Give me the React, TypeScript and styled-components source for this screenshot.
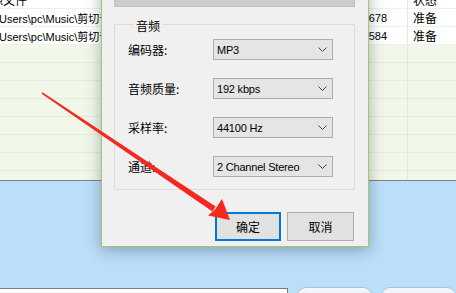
import React from "react";
import styled, { createGlobalStyle } from "styled-components";

const Global = createGlobalStyle`
  html, body { margin: 0; padding: 0; }
  body { width: 456px; height: 293px; overflow: hidden; background: #bbdef9; }
  #root { width: 456px; height: 293px; }
`;

const CJK = `"Noto Sans CJK SC", "Noto Sans", sans-serif`;
const LAT = `"Liberation Sans", "Noto Sans CJK SC", sans-serif`;

const Screen = styled.div`
  position: relative;
  width: 456px;
  height: 293px;
  overflow: hidden;
  display: flex;
  flex-direction: column;
  background: #bbdef9;
`;

const Table = styled.div`
  height: 181px;
  flex: none;
  overflow: hidden;
  border-bottom: 1px solid #7f7f7f;
  box-sizing: border-box;
  background: #f1f8e9;
`;

const TableInner = styled.div`
  margin-top: -9px;
  margin-left: -20px;
  width: 476px;
  display: flex;
  flex-direction: column;
`;

const Row = styled.div<{ $filled?: boolean }>`
  display: grid;
  grid-template-columns: 350px 78px 1fr;
  height: 18px;
  box-sizing: border-box;
  background: ${(p) => (p.$filled ? "#ffffff" : "#f1f8e9")};
  border-bottom: 1px solid ${(p) => (p.$filled ? "#efefef" : "#e4eadc")};
`;

const Cell = styled.div<{ $align?: "left" | "right"; $pad?: number; $cjk?: boolean }>`
  display: flex;
  align-items: center;
  justify-content: ${(p) => (p.$align === "right" ? "flex-end" : "flex-start")};
  padding-left: ${(p) => (p.$align === "right" ? 0 : p.$pad ?? 5)}px;
  padding-right: ${(p) => (p.$align === "right" ? 20 : 0)}px;
  font-family: ${(p) => (p.$cjk ? CJK : LAT)};
  font-size: ${(p) => (p.$cjk ? 12 : 11)}px;
  color: #000;
  white-space: nowrap;
  overflow: hidden;
  border-right: 1px solid #e6e6e6;
  &:last-child { border-right: none; }
`;

const BlueArea = styled.div`
  flex: none;
  height: 106px;
  background: #bbdef9;
`;

const BottomBar = styled.div`
  flex: none;
  height: 30px;
  display: flex;
  align-items: flex-start;
  gap: 9px;
`;

const PathBox = styled.div`
  width: 292px;
  height: 24px;
  margin-top: 1px;
  background: #ffffff;
  border-top: 1px solid #7a7a7a;
  border-right: 1px solid #7a7a7a;
  box-sizing: border-box;
`;

const PillButton = styled.div`
  width: 76px;
  height: 24px;
  border: 1px solid #a9c2dc;
  border-radius: 9px;
  background: linear-gradient(#f4f8fd, #d9e7f6);
  box-sizing: border-box;
  font-family: ${CJK};
  font-size: 12px;
  color: #1c3b6e;
  display: flex;
  justify-content: center;
  padding-top: 3px;
`;

const Dialog = styled.div`
  position: absolute;
  left: 101px;
  top: -20px;
  width: 268px;
  height: 267px;
  box-sizing: border-box;
  background: #f0f0f0;
  border: 1px solid #a8c46c;
  box-shadow: 0 3px 14px rgba(30, 50, 70, 0.38);
  padding: 6px 13px 0 12px;
  display: flex;
  flex-direction: column;
`;

const TopBar = styled.div`
  height: 20px;
  background: #cccccc;
  border: 1px solid #c2c2c2;
  box-sizing: border-box;
`;

const Group = styled.fieldset`
  margin: 8px 0 0 0;
  padding: 6px 0 12px 13px;
  border: 1px solid #dcdcdc;
  min-width: 0;
  display: flex;
  flex-direction: column;
  gap: 18px;
`;

const Legend = styled.legend`
  font-family: ${CJK};
  font-size: 12px;
  line-height: 14px;
  padding: 4px 2px 0 2px;
  margin-left: 6px;
  color: #000;
`;

const FieldRow = styled.div`
  display: flex;
  align-items: center;
  height: 21px;
`;

const Label = styled.div`
  width: 85px;
  font-family: ${CJK};
  font-size: 12px;
  color: #000;
`;

const Select = styled.div`
  width: 120px;
  height: 21px;
  box-sizing: border-box;
  border: 1px solid #adadad;
  background: #e5e5e5;
  display: flex;
  align-items: center;
  justify-content: space-between;
  padding: 0 5px 0 3px;
  font-family: ${LAT};
  font-size: 11px;
  letter-spacing: -0.2px;
  color: #000;
`;

const Buttons = styled.div`
  margin-top: 22px;
  display: flex;
  justify-content: flex-end;
  gap: 6px;
  padding-right: 1px;
`;

const Button = styled.div<{ $default?: boolean }>`
  width: ${(p) => (p.$default ? 66 : 67)}px;
  height: 29px;
  box-sizing: border-box;
  border: ${(p) => (p.$default ? "2px solid #0078d7" : "1px solid #adadad")};
  background: #e1e1e1;
  display: flex;
  align-items: center;
  justify-content: center;
  font-family: ${CJK};
  font-size: 12px;
  color: #000;
`;

const Overlay = styled.svg`
  position: absolute;
  left: 0;
  top: 0;
  pointer-events: none;
`;

const Chevron = () => (
  <svg width="9" height="5" viewBox="0 0 9 5">
    <polyline points="0.5,0.5 4.5,4.5 8.5,0.5" fill="none" stroke="#444" strokeWidth="1" />
  </svg>
);

const fields: [string, string][] = [
  ["编码器:", "MP3"],
  ["音频质量:", "192 kbps"],
  ["采样率:", "44100 Hz"],
  ["通道:", "2 Channel Stereo"],
];

export default function App() {
  const emptyRows = Array.from({ length: 8 });
  return (
    <Screen>
      <Global />
      <Table>
        <TableInner>
          <Row $filled>
            <Cell $cjk $pad={11}>源文件</Cell>
            <Cell $cjk $pad={4}>大小</Cell>
            <Cell $cjk>状态</Cell>
          </Row>
          <Row $filled>
            <Cell>C:\Users\pc\Music\剪切音频01.mp3</Cell>
            <Cell $align="right">5125678</Cell>
            <Cell $cjk>准备</Cell>
          </Row>
          <Row $filled>
            <Cell>C:\Users\pc\Music\剪切音频02.mp3</Cell>
            <Cell $align="right">5305584</Cell>
            <Cell $cjk>准备</Cell>
          </Row>
          {emptyRows.map((_, i) => (
            <Row key={i}>
              <Cell />
              <Cell />
              <Cell />
            </Row>
          ))}
        </TableInner>
      </Table>
      <BlueArea />
      <BottomBar>
        <PathBox />
        <PillButton>转换</PillButton>
        <PillButton>打开目录</PillButton>
      </BottomBar>

      <Dialog>
        <TopBar />
        <Group>
          <Legend>音频</Legend>
          {fields.map(([l, v]) => (
            <FieldRow key={l}>
              <Label>{l}</Label>
              <Select>
                <span>{v}</span>
                <Chevron />
              </Select>
            </FieldRow>
          ))}
        </Group>
        <Buttons>
          <Button $default>确定</Button>
          <Button>取消</Button>
        </Buttons>
      </Dialog>

      <Overlay width="456" height="293" viewBox="0 0 456 293">
        <polygon points="41.6,93.7 42.4,92.3 215.6,206.6 212.4,211.4" fill="#f5281f" />
        <polygon points="230,220 208,215.5 215,209.5 222,199" fill="#f5281f" />
      </Overlay>
    </Screen>
  );
}
